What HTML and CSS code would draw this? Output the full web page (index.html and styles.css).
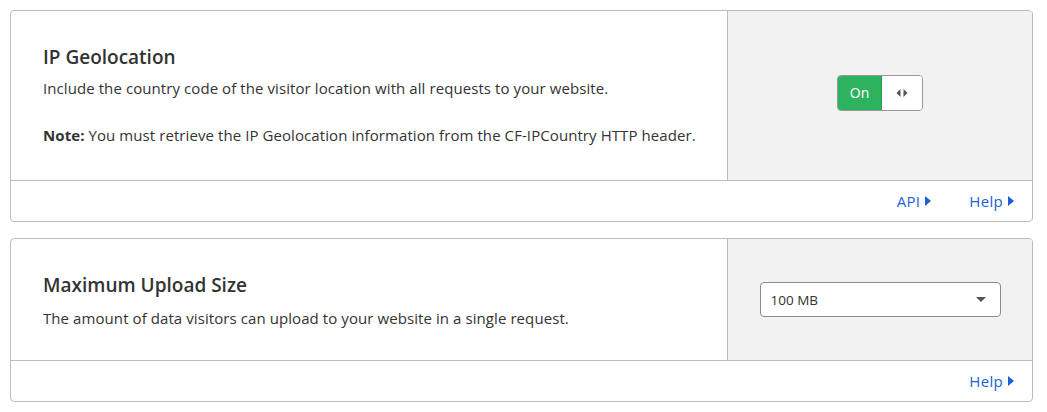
FILE: index.html
```html
<!DOCTYPE html>
<html>
<head>
<meta charset="utf-8">
<link rel="stylesheet" href="styles.css">
</head>
<body>
<div class="page">
  <section class="card">
    <div class="card-main">
      <div class="card-body body-1">
        <h2 class="card-title">IP Geolocation</h2>
        <p class="card-text">Include the country code of the visitor location with all requests to your website.</p>
        <p class="card-text note"><strong>Note:</strong> You must retrieve the IP Geolocation information from the CF-IPCountry HTTP header.</p>
      </div>
      <div class="card-control">
        <div class="toggle">
          <span class="toggle-on">On</span>
          <span class="toggle-handle">
            <svg width="12" height="8" viewBox="0 0 12 8"><path d="M4.5 0 L0.5 4 L4.5 8 Z M7.5 0 L11.5 4 L7.5 8 Z" fill="#555"/></svg>
          </span>
        </div>
      </div>
    </div>
    <div class="card-footer">
      <a class="link">API <span class="caret"></span></a>
      <a class="link">Help <span class="caret"></span></a>
    </div>
  </section>

  <section class="card">
    <div class="card-main">
      <div class="card-body body-2">
        <h2 class="card-title">Maximum Upload Size</h2>
        <p class="card-text">The amount of data visitors can upload to your website in a single request.</p>
      </div>
      <div class="card-control">
        <div class="select">
          <span>100 MB</span>
          <span class="select-arrow"></span>
        </div>
      </div>
    </div>
    <div class="card-footer">
      <a class="link">Help <span class="caret"></span></a>
    </div>
  </section>
</div>
</body>
</html>
```

FILE: styles.css
```css
* { box-sizing: border-box; }
html, body { margin: 0; padding: 0; background: #fff; }
body {
  font-family: "Open Sans", "Noto Sans", sans-serif;
  color: #333;
}
.page {
  padding: 10px 14px 0 10px;
  display: flex;
  flex-direction: column;
  gap: 16px;
}
.card {
  border: 1px solid #bcbcbc;
  border-radius: 4px;
  overflow: hidden;
}
.card-main {
  display: flex;
  border-bottom: 1px solid #bcbcbc;
}
.card-body {
  flex: 1;
  min-width: 0;
  padding: 33px 16px 34px 32px;
}
.body-2 { padding: 33px 16px 31px 32px; }
.card-title {
  margin: 0 0 7px 0;
  font-size: 19px;
  font-weight: 600;
  color: #333;
  line-height: 26px;
}
.body-2 .card-title { margin-bottom: 9px; }
.card-text {
  margin: 0;
  font-size: 15px;
  letter-spacing: 0.08px;
  line-height: 22px;
  color: #333;
  white-space: nowrap;
}
.note { margin-top: 25px; }
.card-control {
  width: 305px;
  flex: none;
  background: #f2f2f2;
  border-left: 1px solid #bcbcbc;
  display: flex;
  align-items: center;
  justify-content: center;
}
.toggle {
  display: flex;
  height: 36px;
  width: 86px;
  border: 1px solid #999;
  border-radius: 4px;
  overflow: hidden;
  margin-top: -6px;
}
.toggle-on {
  width: 44px;
  background: #2db35d;
  color: #fff;
  font-size: 14px;
  display: flex;
  align-items: center;
  justify-content: center;
  border-right: 1px solid #27994f;
}
.toggle-handle {
  flex: 1;
  background: #fff;
  display: flex;
  align-items: center;
  justify-content: center;
}
.card-footer {
  height: 40px;
  display: flex;
  justify-content: flex-end;
  align-items: center;
  gap: 38px;
  padding-right: 18px;
}
.link {
  color: #1a5fd6;
  font-size: 15px;
  letter-spacing: 0.3px;
  display: flex;
  align-items: center;
  gap: 5px;
}
.caret {
  width: 0; height: 0;
  border-top: 5px solid transparent;
  border-bottom: 5px solid transparent;
  border-left: 6px solid #1a5fd6;
}
.select {
  width: 241px;
  height: 35px;
  background: #fff;
  border: 1px solid #8c8c8c;
  border-radius: 4px;
  display: flex;
  align-items: center;
  justify-content: space-between;
  padding: 0 14px 0 10px;
  font-size: 13.5px;
  color: #333;
}
.select-arrow {
  width: 0; height: 0;
  border-left: 5px solid transparent;
  border-right: 5px solid transparent;
  border-top: 5px solid #555;
}
```
